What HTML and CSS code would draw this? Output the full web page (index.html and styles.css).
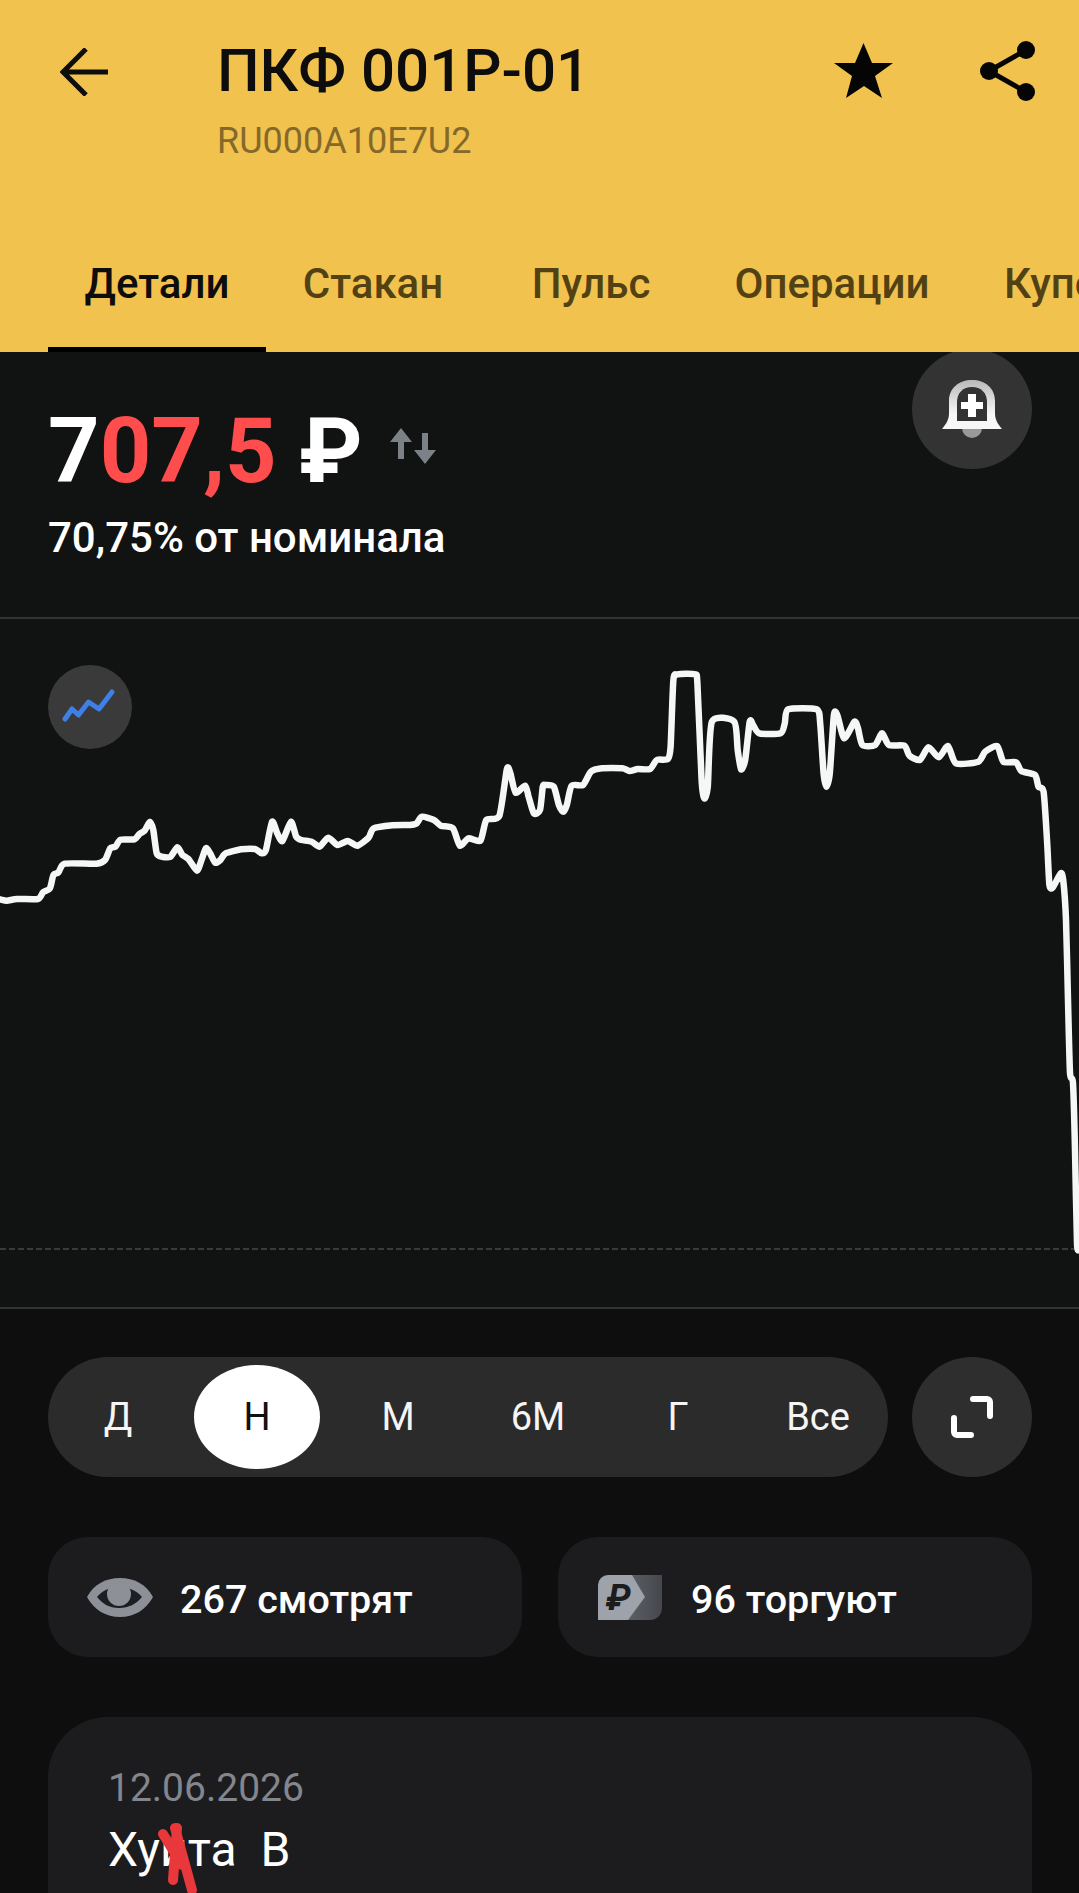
FILE: index.html
```html
<!DOCTYPE html>
<html lang="ru">

<head>
    <meta charset="UTF-8">
    <meta name="viewport" content="width=device-width, initial-scale=1.0">
    <title>ПКФ 001Р-01</title>
    <link rel="stylesheet" href="styles.css">
</head>

<body>
    <header class="top">
        <div class="top-row">
            <svg class="back-icon" width="48" height="48" viewBox="0 0 48 48">
                <path d="M26 1 3 24l23 23M3 24h45" fill="none" stroke="#0d0d0d" stroke-width="5" />
            </svg>
            <div class="top-title">
                <h1>ПКФ 001Р-01</h1>
                <p>RU000A10E7U2</p>
            </div>
            <svg class="star-icon" width="59" height="55" viewBox="0 0 59 55">
                <path d="M29.500 0 38 20h21L41 33l7 22-18-12-18 12 6-22L0 20h21z" fill="#050505" />
            </svg>
            <svg class="share-icon" width="58" height="62" viewBox="0 0 58 62">
                <path d="M47 10 10 31l37 21" fill="none" stroke="#050505" stroke-width="5" />
                <circle cx="47" cy="10" r="9" fill="#050505" />
                <circle cx="10" cy="31" r="9" fill="#050505" />
                <circle cx="47" cy="52" r="9" fill="#050505" />
            </svg>
        </div>
        <nav class="tabs">
            <a class="tab tab-details active">Детали</a>
            <a class="tab tab-book">Стакан</a>
            <a class="tab tab-pulse">Пульс</a>
            <a class="tab tab-ops">Операции</a>
            <a class="tab tab-coupons">Купоны</a>
        </nav>
    </header>

    <section class="price">
        <div>
            <div class="price-row">
                <span class="price-value">7<span class="red">07,5</span> ₽</span>
                <svg class="swap-icon" width="48" height="37" viewBox="0 0 48 37">
                    <path d="M12 0l11 14h-8v17H9V14H1zM36 36 25 22h8V5h6v17h8z" fill="#7c8087" />
                </svg>
            </div>
            <p class="price-note">70,75% от номинала</p>
        </div>
        <button class="round-btn bell-btn">
            <svg width="62" height="60" viewBox="0 0 62 60">
                <defs>
                    <linearGradient id="bellFill" x1="0" y1="0" x2="0" y2="1">
                        <stop offset="0" stop-color="#b9b9b9" />
                        <stop offset="0.7" stop-color="#f7f7f7" />
                    </linearGradient>
                </defs>
                <circle cx="31" cy="49" r="10" fill="#999" />
                <path d="M1 50C6 44 8 40 8 34V22C8 9 18 1 31 1s23 8 23 21v12c0 6 2 10 7 16z" fill="url(#bellFill)" />
                <path d="M16 42V23c0-9 6-15 15-15s15 6 15 15v19z" fill="#333" />
                <path d="M27 15h8v8h7v7h-7v8h-8v-8h-7v-7h7z" fill="#fff" />
            </svg>
        </button>
    </section>

    <section class="chart">
        <span class="chart-type">
            <svg width="84" height="84" viewBox="0 0 84 84">
                <path d="M17 54l7-10 6.500 6L40.500 37 51 44l13-17" fill="none" stroke="#3f80e8" stroke-width="5" stroke-linecap="round" stroke-linejoin="round" />
            </svg>
        </span>
        <svg class="chart-svg" width="1079" height="688" viewBox="0 619 1079 688">
            <line x1="0" y1="1249" x2="1079" y2="1249" stroke="#3a3a3a" stroke-width="2" stroke-dasharray="6 3" />
            <path id="priceLine" class="line" />
        </svg>
    </section>

    <section class="periods">
        <div class="period-bar">
            <span class="period">Д</span>
            <span class="period selected">Н</span>
            <span class="period">М</span>
            <span class="period">6М</span>
            <span class="period">Г</span>
            <span class="period">Все</span>
        </div>
        <button class="round-btn">
            <svg width="42" height="42" viewBox="0 0 42 42">
                <path d="M22 3h14a3 3 0 0 1 3 3v14M20 39H6a3 3 0 0 1-3-3V22" fill="none" stroke="#fff" stroke-width="6" stroke-linecap="round" />
            </svg>
        </button>
    </section>

    <section class="stats">
        <div class="stat">
            <svg class="eye-icon" width="66" height="40" viewBox="0 0 66 40">
                <path d="M0 20C7 7 19 1 33 1s26 6 33 19c-7 13-19 20-33 20S7 33 0 20z" fill="#8d9096" />
                <path d="M10 20c6-7 13-10 22-10s17 3 23 10c-6 7-13 11-23 11s-16-4-22-11z" fill="#1c1e24" />
                <circle cx="32" cy="17" r="12" fill="#8d9096" />
            </svg>
            <span>267 смотрят</span>
        </div>
        <div class="stat">
            <svg class="rub-icon" width="64" height="46" viewBox="0 0 64 46">
                <defs>
                    <linearGradient id="backFill" x1="0" y1="0" x2="1" y2="0">
                        <stop offset="0" stop-color="#5c5f64" />
                        <stop offset="1" stop-color="#45474c" />
                    </linearGradient>
                </defs>
                <path d="M30 1h34v33a12 12 0 0 1-12 12H30z" fill="url(#backFill)" />
                <path d="M10 1h24l13 22-17 23H0V11A10 10 0 0 1 10 1z" fill="#9ea3ab" />
                <text x="8" y="36" class="rub-glyph">₽</text>
            </svg>
            <span>96 торгуют</span>
        </div>
    </section>

    <section class="post">
        <p class="post-date">12.06.2026</p>
        <p class="post-text">Хуита&nbsp; В</p>
        <svg class="scribble" width="44" height="73" viewBox="0 0 44 73">
            <path d="M8 14l19 31M20 8l17 62M22 8l-4 52" fill="none" stroke="#e8383c" stroke-width="10" stroke-linecap="round" />
        </svg>
    </section>

    <script>
        // точки графика: x и y подряд, в масштабе исходных кусков
        const left = [0,778, 20,782, 50,777, 110,777, 125,757, 145,745, 155,705, 170,697, 188,671, 280,671, 305,660, 320,625, 335,620, 350,599, 390,598, 405,582, 420,572, 435,545, 445,570, 455,640, 470,650, 495,650, 515,622, 530,645, 548,658, 572,692, 585,660, 598,625, 610,640, 625,668, 640,660, 655,640, 700,628, 740,627, 760,640, 772,630, 790,545, 805,580, 820,603, 845,545, 860,590, 875,600, 905,605, 928,620, 953,593, 980,615, 1010,603, 1038,617, 1070,593, 1085,565, 1140,556, 1190,555, 1210,550, 1225,530, 1260,540, 1280,557, 1315,565, 1335,617, 1360,595, 1395,602, 1412,540, 1450,527, 1472,387, 1482,400, 1497,458, 1525,437, 1535,470, 1550,520];
        const right = [0,510, 8,440, 15,435, 40,440, 55,495, 68,515, 78,495, 92,437, 125,435, 148,395, 180,385, 240,385, 260,393, 285,387, 320,387, 340,360, 372,357, 380,320, 388,120, 400,103, 450,103, 458,130, 470,420, 478,475, 488,440, 500,245, 565,245, 575,330, 585,388, 597,360, 610,245, 620,255, 638,280, 700,280, 712,250, 722,208, 805,208, 815,250, 825,400, 833,440, 843,400, 855,225, 865,225, 885,295, 915,245, 925,265, 938,315, 975,315, 995,280, 1015,315, 1060,317, 1075,347, 1105,360, 1130,322, 1160,352, 1187,318, 1210,370, 1275,365, 1295,335, 1330,318, 1348,365, 1385,367, 1400,393, 1440,405, 1450,440, 1465,455, 1475,600, 1482,735, 1492,742, 1515,700, 1522,720];
        const tail = [1066,920, 1068,1000, 1070,1073, 1073,1083, 1075,1150, 1077,1243, 1079,1250];

        const points = [];
        for (let i = 0; i < left.length; i += 2) {
            points.push([left[i] * 0.34439, 640 + left[i + 1] / 3]);
        }
        for (let i = 0; i < right.length; i += 2) {
            points.push([540 + right[i] * 0.34375, 640 + right[i + 1] / 3]);
        }
        for (let i = 0; i < tail.length; i += 2) {
            points.push([tail[i], tail[i + 1]]);
        }

        // сглаживание Catmull-Rom
        let d = 'M' + points[0].join(' ');
        for (let i = 0; i < points.length - 1; i++) {
            const p0 = points[i - 1] || points[i];
            const p1 = points[i];
            const p2 = points[i + 1];
            const p3 = points[i + 2] || p2;
            const k = 0.11;
            d += ' C' + (p1[0] + (p2[0] - p0[0]) * k).toFixed(1) + ' ' + (p1[1] + (p2[1] - p0[1]) * k).toFixed(1) +
                ' ' + (p2[0] - (p3[0] - p1[0]) * k).toFixed(1) + ' ' + (p2[1] - (p3[1] - p1[1]) * k).toFixed(1) +
                ' ' + p2[0].toFixed(1) + ' ' + p2[1].toFixed(1);
        }
        document.getElementById('priceLine').setAttribute('d', d);
    </script>
</body>

</html>
```

FILE: styles.css
```css
body {
    position: relative;
    width: 1079px;
    height: 1893px;
    margin: 0;
    overflow: hidden;
    background-color: #0e0e0f;
    font-family: Roboto, "Liberation Sans", sans-serif;
    color: #fff;
}

p,
h1 {
    margin: 0;
}

.top {
    height: 352px;
    background-color: #f2c24f;
    position: relative;
    z-index: 1;
}

.top-row {
    display: flex;
    align-items: flex-start;
    height: 260px;
    padding-left: 60px;
    box-sizing: border-box;
}

.back-icon {
    margin-top: 48px;
    flex-shrink: 0;
}

.top-title {
    margin-left: 109px;
    width: 600px;
    flex-shrink: 0;
    padding-top: 38px;
}

.top-title h1 {
    font-size: 60px;
    font-weight: 500;
    line-height: 66px;
    color: #0d0d0d;
}

.top-title p {
    margin-top: 16px;
    font-size: 36px;
    line-height: 42px;
    color: #84692a;
}

.star-icon {
    margin-top: 43px;
    margin-left: 17px;
    flex-shrink: 0;
}

.share-icon {
    margin-top: 40px;
    margin-left: 86px;
    flex-shrink: 0;
}

.tabs {
    display: flex;
    height: 92px;
    padding-left: 48px;
    overflow: hidden;
}

.tab {
    flex-shrink: 0;
    box-sizing: border-box;
    height: 92px;
    font-size: 42px;
    font-weight: 500;
    line-height: 47px;
    text-align: center;
    color: #524213;
}

.tab-details {
    width: 218px;
}

.tab-book {
    width: 214px;
}

.tab-pulse {
    width: 222px;
}

.tab-ops {
    width: 260px;
}

.tab-coupons {
    padding-left: 42px;
    text-align: left;
}

.tab.active {
    color: #0d0d0d;
    border-bottom: 5px solid #000;
}

.price {
    display: flex;
    justify-content: space-between;
    align-items: flex-start;
    height: 265px;
    padding: 0 47px 0 48px;
    background-color: #111212;
}

.price-row {
    display: flex;
    align-items: flex-start;
    margin-top: 47px;
}

.price-value {
    font-size: 90px;
    font-weight: 700;
    line-height: 106px;
}

.red {
    color: #ff4c4c;
}

.swap-icon {
    margin: 29px 0 0 26px;
}

.price-note {
    margin-top: 9px;
    font-size: 42px;
    font-weight: 500;
    line-height: 47px;
}

.round-btn {
    flex-shrink: 0;
    display: flex;
    align-items: center;
    justify-content: center;
    width: 120px;
    height: 120px;
    padding: 0;
    border: none;
    border-radius: 50%;
    background-color: #2e2e2e;
}

.bell-btn {
    position: relative;
    z-index: 0;
    margin-top: -3px;
    background-color: #333;
}

.chart {
    position: relative;
    height: 688px;
    border-top: 2px solid #333;
    border-bottom: 2px solid #333;
    background-color: #111212;
}

.chart-svg {
    display: block;
}

.line {
    fill: none;
    stroke: #f5f6f6;
    stroke-width: 6.5;
    stroke-linejoin: round;
    stroke-linecap: round;
}

.chart-type {
    position: absolute;
    top: 46px;
    left: 48px;
    width: 84px;
    height: 84px;
    border-radius: 50%;
    background-color: #3a3a3a;
}

.periods {
    display: flex;
    justify-content: space-between;
    padding: 48px 47px 0 48px;
}

.period-bar {
    display: flex;
    align-items: center;
    width: 840px;
    height: 120px;
    border-radius: 60px;
    background-color: #2b2b2b;
}

.period {
    flex: 0 0 140px;
    text-align: center;
    font-size: 38px;
    line-height: 104px;
    color: #f5f5f5;
}

.period.selected {
    flex-basis: 126px;
    margin: 0 8px 0 6px;
    border-radius: 63px / 52px;
    background-color: #fff;
    color: #111;
}

.stats {
    display: flex;
    gap: 36px;
    padding: 60px 47px 0 48px;
}

.stat {
    flex: 1;
    display: flex;
    align-items: center;
    height: 120px;
    border-radius: 40px;
    background-color: #1c1c1e;
    font-size: 39.5px;
    font-weight: 500;
}

.stat span {
    margin-top: 4px;
}

.eye-icon {
    margin: 0 27px 0 39px;
}

.rub-icon {
    margin: 0 29px 0 40px;
}

.rub-glyph {
    font-size: 36px;
    font-weight: 700;
    font-style: italic;
    fill: #1c1c1e;
}

.post {
    position: relative;
    box-sizing: border-box;
    margin: 60px 47px 0 48px;
    height: 176px;
    padding: 48px 60px 0;
    border-radius: 60px 60px 0 0;
    background-color: #1c1c1e;
}

.post-date {
    font-size: 39px;
    line-height: 46px;
    color: #83868c;
}

.post-text {
    margin-top: 12px;
    font-size: 48px;
    line-height: 54px;
    color: #fff;
}

.scribble {
    position: absolute;
    top: 103px;
    left: 107px;
}
```
